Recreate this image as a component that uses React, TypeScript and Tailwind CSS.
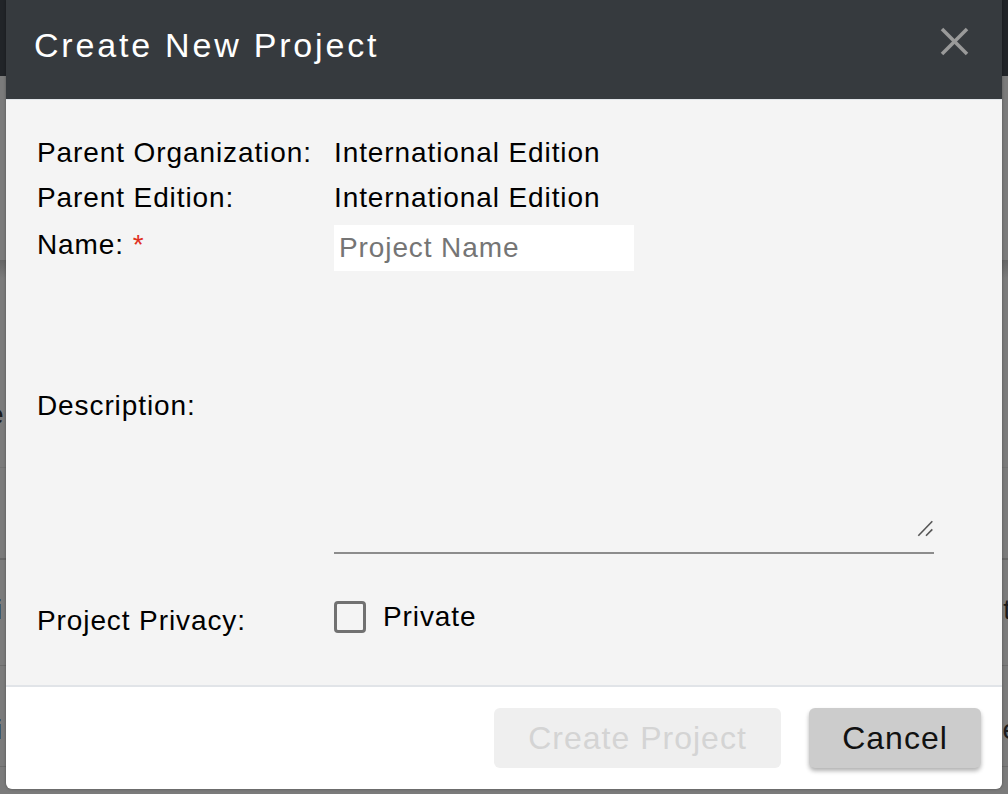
import { useState } from 'react';

function CloseIcon() {
  return (
    <svg viewBox="0 0 29 29" className="h-[29px] w-[29px]" fill="none" stroke="#9a9a9a" strokeWidth="3.5">
      <line x1="2" y1="2" x2="27" y2="27" />
      <line x1="27" y1="2" x2="2" y2="27" />
    </svg>
  );
}

function ResizeGrip() {
  return (
    <svg viewBox="0 0 17 17" className="pointer-events-none absolute bottom-[15px] right-0 h-[17px] w-[17px]" fill="none" stroke="#555" strokeWidth="1.6">
      <line x1="1.3" y1="15.7" x2="15.3" y2="1.3" />
      <line x1="9" y1="15.7" x2="15.3" y2="9.4" />
    </svg>
  );
}

/* page behind the dimmed overlay, only its edges show */
function Backdrop() {
  return (
    <div className="flex flex-col text-[28px] leading-none text-[#1b1b1b]">
      <div className="h-[76px] bg-[#212428]" />
      <div className="h-[184px]" />
      <div className="flex h-[207px] items-end justify-between bg-gradient-to-b from-[#666] via-[#7b7b7b] via-[9%] to-[#7b7b7b] pb-[38px]">
        <span className="-ml-[12px]">e</span>
      </div>
      <div className="h-[91px] border-t border-[#737373]" />
      <div className="flex h-[107px] items-start justify-between border-t-2 border-[#686868] pt-[36px]">
        <span className="-ml-[4px]">i</span>
        <span className="-mr-[3px]">t</span>
      </div>
      <div className="flex h-[101px] items-start justify-between border-t border-[#6c6c6c] pt-[50px]">
        <span className="-ml-[4px]">i</span>
        <span className="-mr-[10px]">e</span>
      </div>
      <div className="flex-1 border-t border-[#6c6c6c]" />
    </div>
  );
}

export default function App() {
  const [name, setName] = useState('');
  const [description, setDescription] = useState('');
  const [isPrivate, setIsPrivate] = useState(false);

  const label = 'w-[297px] shrink-0 text-[28px] leading-[45px] tracking-[0.9px] text-black';

  return (
    <div className="relative h-[794px] w-[1008px] overflow-hidden bg-[#7b7b7b] font-['Liberation_Sans',Arial,sans-serif]">
      <Backdrop />

      {/* Modal */}
      <div className="absolute left-[6px] top-0 flex h-[789px] w-[996px] flex-col overflow-hidden rounded-b-[6px] shadow-[0_0_3px_rgba(0,0,0,0.35)]">
        {/* Header */}
        <div className="flex h-[99px] shrink-0 items-start justify-between bg-[#363a3e] pl-[28px] pr-[33px]">
          <h2 className="pt-[28px] text-[34px] font-normal leading-[34px] tracking-[2.8px] text-white">
            Create New Project
          </h2>
          <button className="mt-[27px]" aria-label="Close">
            <CloseIcon />
          </button>
        </div>
        <div className="h-[1px] shrink-0 bg-[#e2e5e9]" />

        {/* Body */}
        <div className="flex flex-1 flex-col bg-[#f4f4f4] pl-[31px] pt-[30px]">
          <div className="flex">
            <span className={label}>Parent Organization:</span>
            <span className="text-[28px] leading-[45px] tracking-[0.9px] text-black">International Edition</span>
          </div>
          <div className="flex">
            <span className={label}>Parent Edition:</span>
            <span className="text-[28px] leading-[45px] tracking-[0.9px] text-black">International Edition</span>
          </div>

          <div className="flex h-[51px]">
            <span className={`${label} pt-[2px]`}>
              Name: <span className="text-[#e0301e]">*</span>
            </span>
            <input
              value={name}
              onChange={(e) => setName(e.target.value)}
              placeholder="Project Name"
              className="mt-[5px] h-[46px] w-[300px] bg-white px-[5px] text-[28px] tracking-[0.9px] text-black outline-none placeholder:text-[#757575]"
            />
          </div>

          <div className="flex h-[283px]">
            <span className={`${label} mt-[112px] self-start`}>Description:</span>
            <div className="relative h-[283px] w-[600px] border-b-2 border-[#8c8c8c]">
              <textarea
                value={description}
                onChange={(e) => setDescription(e.target.value)}
                className="h-full w-full resize-none bg-transparent text-[28px] tracking-[0.9px] text-black outline-none"
              />
              <ResizeGrip />
            </div>
          </div>

          <div className="flex">
            <span className={`${label} mt-[44px]`}>Project Privacy:</span>
            <label className="mt-[47px] flex h-[32px] cursor-pointer items-center gap-[17px]">
              <button
                type="button"
                onClick={() => setIsPrivate(!isPrivate)}
                className="h-[32px] w-[32px] rounded-[4px] border-[3px] border-[#717171] bg-transparent"
                aria-checked={isPrivate}
                role="checkbox"
              />
              <span className="text-[28px] leading-[32px] tracking-[0.9px] text-black">Private</span>
            </label>
          </div>
        </div>

        {/* Footer */}
        <div className="flex h-[104px] shrink-0 items-start justify-end gap-[28px] border-t-2 border-[#e1e4e8] bg-white pr-[21px] pt-[21px]">
          <button
            disabled
            className="h-[60px] w-[287px] rounded-[6px] bg-[#efefef] text-[32px] font-light tracking-[1px] text-[#d4d4d4]"
          >
            Create Project
          </button>
          <button className="h-[60px] w-[172px] rounded-[6px] bg-[#cccccc] text-[32px] font-light tracking-[1px] text-[#111] shadow-[0_3px_4px_rgba(0,0,0,0.3)]">
            Cancel
          </button>
        </div>
      </div>
    </div>
  );
}
